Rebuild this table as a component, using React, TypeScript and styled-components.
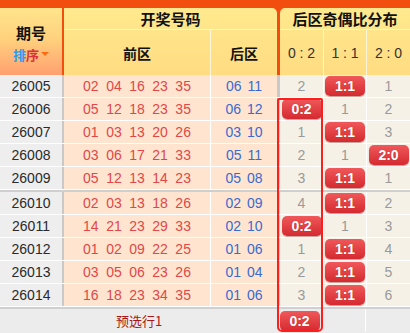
import React from "react";
import { styled, createGlobalStyle } from "styled-components";

type Row = [string, string[], string[], (number | string)[]];

const rows: Row[] = [
  ["26005", ["02", "04", "16", "23", "35"], ["06", "11"], [2, "1:1", 1]],
  ["26006", ["05", "12", "18", "23", "35"], ["06", "12"], ["0:2", 1, 2]],
  ["26007", ["01", "03", "13", "20", "26"], ["03", "10"], [1, "1:1", 3]],
  ["26008", ["03", "06", "17", "21", "33"], ["05", "11"], [2, 1, "2:0"]],
  ["26009", ["05", "12", "13", "14", "23"], ["05", "08"], [3, "1:1", 1]],
  ["26010", ["02", "03", "13", "18", "26"], ["02", "09"], [4, "1:1", 2]],
  ["26011", ["14", "21", "23", "29", "33"], ["02", "10"], ["0:2", 1, 3]],
  ["26012", ["01", "02", "09", "22", "25"], ["01", "06"], [1, "1:1", 4]],
  ["26013", ["03", "05", "06", "23", "26"], ["01", "04"], [2, "1:1", 5]],
  ["26014", ["16", "18", "23", "34", "35"], ["01", "06"], [3, "1:1", 6]],
];

const GlobalStyle = createGlobalStyle`
  body {
    margin: 0;
    background: #ffffff;
    font-family: "Liberation Sans", "Noto Sans CJK SC", sans-serif;
  }
`;

export default function App() {
  const renderRow = (r: Row) => (
    <BodyRow key={r[0]}>
      <PeriodCell>{r[0]}</PeriodCell>
      <FrontCell>
        {r[1].map((n, i) => (
          <Ball key={i} $color="#e04848">{n}</Ball>
        ))}
      </FrontCell>
      <BackCell>
        {r[2].map((n, i) => (
          <Ball key={i} $color="#3a6ad0">{n}</Ball>
        ))}
      </BackCell>
      {r[3].map((v, i) => (
        <RatioCell key={i} $mid={i === 1}>
          {typeof v === "string" ? <Bubble>{v}</Bubble> : v}
        </RatioCell>
      ))}
    </BodyRow>
  );

  return (
    <>
      <GlobalStyle />
      <Board>
        <Header>
          <PeriodHead>
            <HeadTitle>期号</HeadTitle>
            <SortLabel>
              <SortBlue>排</SortBlue>
              <SortRed>序</SortRed>
              <SortArrow />
            </SortLabel>
          </PeriodHead>
          <HeadGroup $width={213} $gap={2} $radius="0 5px 0 0">
            <GroupTitle>开奖号码</GroupTitle>
            <SubRow>
              <SubCell $width={146}>前区</SubCell>
              <SubCell $width={66} $line>后区</SubCell>
            </SubRow>
          </HeadGroup>
          <HeadGroup $width={130} $gap={3} $radius="5px 0 0 0">
            <GroupTitle>后区奇偶比分布</GroupTitle>
            <SubRow>
              <RatioHead $width={43}>0 : 2</RatioHead>
              <RatioHead $width={42} $line>1 : 1</RatioHead>
              <RatioHead $width={43} $line>2 : 0</RatioHead>
            </SubRow>
          </HeadGroup>
        </Header>
        <Body>
          {rows.slice(0, 5).map(renderRow)}
          <GroupSplit />
          {rows.slice(5).map(renderRow)}
          <Footer>
            <FooterLabel>预选行1</FooterLabel>
            <FooterRatio>
              <Bubble>0:2</Bubble>
            </FooterRatio>
            <FooterRatio $line />
            <FooterRatio $line />
          </Footer>
          <TrendBox />
        </Body>
      </Board>
    </>
  );
}

const Board = styled.div`
  width: 410px;
  height: 333px;
  overflow: hidden;
  background: #ececec;
`;

const Header = styled.div`
  display: flex;
  height: 75px;
  padding-top: 8px;
  box-sizing: border-box;
  background: #f24e10;
`;

const PeriodHead = styled.div`
  width: 62px;
  display: flex;
  flex-direction: column;
  align-items: center;
  justify-content: center;
  gap: 3px;
  padding-top: 2px;
  background: linear-gradient(#ffe48c 0%, #ffd27e 45%, #ffa070 100%);
`;

const HeadTitle = styled.div`
  font-family: "Noto Sans CJK SC", sans-serif;
  font-weight: 700;
  font-size: 15px;
  line-height: 20px;
  color: #111;
`;

const SortLabel = styled.div`
  display: flex;
  align-items: center;
  font-family: "Noto Sans CJK SC", sans-serif;
  font-weight: 700;
  font-size: 13px;
  line-height: 17px;
`;

const SortBlue = styled.span`
  color: #2b9cf0;
`;

const SortRed = styled.span`
  color: #d8323a;
`;

const SortArrow = styled.span`
  width: 0;
  height: 0;
  margin-left: 2px;
  border-left: 4px solid transparent;
  border-right: 4px solid transparent;
  border-top: 4px solid #ff6a10;
`;

const HeadGroup = styled.div<{ $width: number; $gap: number; $radius: string }>`
  width: ${(p) => p.$width}px;
  margin-left: ${(p) => p.$gap}px;
  display: flex;
  flex-direction: column;
  border-radius: ${(p) => p.$radius};
  overflow: hidden;
  background: linear-gradient(#ffe98e, #ffdc82);
`;

const GroupTitle = styled.div`
  height: 21px;
  line-height: 21px;
  text-align: center;
  font-family: "Noto Sans CJK SC", sans-serif;
  font-weight: 700;
  font-size: 15px;
  color: #111;
  border-bottom: 1px solid #fff6d8;
`;

const SubRow = styled.div`
  flex: 1;
  display: flex;
`;

const SubCell = styled.div<{ $width: number; $line?: boolean }>`
  width: ${(p) => p.$width}px;
  display: flex;
  align-items: center;
  justify-content: center;
  font-family: "Noto Sans CJK SC", sans-serif;
  font-weight: 700;
  font-size: 14px;
  color: #111;
  border-left: ${(p) => (p.$line ? "1px solid #fff6d8" : "none")};
`;

const RatioHead = styled(SubCell)`
  font-family: "Liberation Sans", sans-serif;
  font-weight: 400;
  font-size: 14px;
  color: #333;
`;

const Body = styled.div`
  position: relative;
`;

const BodyRow = styled.div`
  display: flex;
  height: 23px;
  border-bottom: 1px solid #ffffff;
  box-sizing: border-box;
  font-size: 14px;
`;

const PeriodCell = styled.div`
  width: 62px;
  display: flex;
  align-items: center;
  justify-content: center;
  background: #eeeeee;
  color: #2a2a2a;
  border-right: 2px solid #c9c9c9;
`;

const FrontCell = styled.div`
  width: 146px;
  display: flex;
  align-items: center;
  justify-content: center;
  gap: 7.5px;
  background: #ffe5cf;
  border-right: 1px solid #ffffff;
`;

const BackCell = styled(FrontCell)`
  width: 66px;
  gap: 6px;
  border-right: 3px solid #c9c9c9;
`;

const Ball = styled.span<{ $color: string }>`
  color: ${(p) => p.$color};
`;

const RatioCell = styled.div<{ $mid?: boolean }>`
  width: ${(p) => (p.$mid ? 42 : 43)}px;
  display: flex;
  align-items: center;
  justify-content: center;
  background: #f5f1e6;
  color: #9a9a9a;
  border-left: ${(p) => (p.$mid ? "1px solid #ffffff" : "none")};
  border-right: ${(p) => (p.$mid ? "1px solid #ffffff" : "none")};
`;

const Bubble = styled.span`
  width: 40px;
  height: 20px;
  border-radius: 5px;
  display: flex;
  align-items: center;
  justify-content: center;
  background: linear-gradient(#f0585a, #d42a30);
  box-shadow: 0 1px 1px rgba(120, 0, 0, 0.35);
  color: #ffffff;
  font-size: 14px;
  font-weight: 700;
  text-shadow: 0 0 1px rgba(120, 0, 0, 0.4);
`;

const GroupSplit = styled.div`
  height: 2px;
  background: #cfcfcf;
`;

const Footer = styled.div`
  display: flex;
  height: 25px;
  border-top: 2px solid #d0d0d0;
  box-sizing: border-box;
  background: #ececec;
`;

const FooterLabel = styled.div`
  width: 278px;
  display: flex;
  align-items: center;
  justify-content: center;
  font-family: "Noto Sans CJK SC", sans-serif;
  font-size: 13px;
  color: #a81818;
`;

const FooterRatio = styled.div<{ $line?: boolean }>`
  width: 43px;
  display: flex;
  align-items: center;
  justify-content: center;
  border-left: ${(p) => (p.$line ? "1px solid #ffffff" : "none")};
`;

const TrendBox = styled.div`
  position: absolute;
  left: 277px;
  top: 23px;
  width: 46px;
  height: 234px;
  box-sizing: border-box;
  border: 2px solid #ff1e1e;
  border-radius: 2px 2px 5px 5px;
  pointer-events: none;
`;
